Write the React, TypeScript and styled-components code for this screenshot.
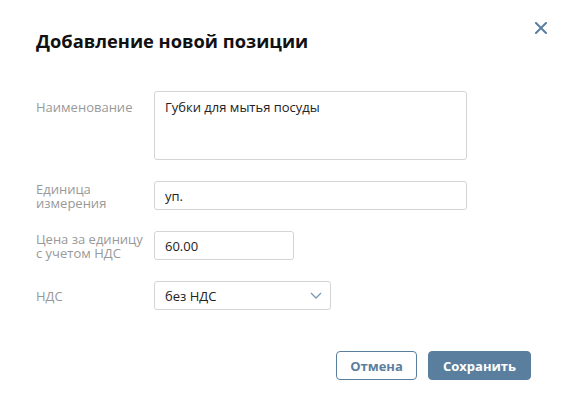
import styled, { createGlobalStyle } from 'styled-components';

const GlobalStyle = createGlobalStyle`
  html, body {
    margin: 0;
    padding: 0;
    background: #fff;
  }
  body {
    font-family: "Open Sans", "Noto Sans", sans-serif;
    color: #222;
  }
`;

const accent = '#5a7f9e';

const Dialog = styled.div`
  position: relative;
  box-sizing: border-box;
  width: 567px;
  height: 417px;
  padding: 28px 36px 0 36px;
  background: #fff;
`;

const CloseButton = styled.button`
  position: absolute;
  top: 20px;
  right: 18px;
  width: 16px;
  height: 16px;
  padding: 0;
  border: none;
  background: none;
  cursor: pointer;
  display: flex;
  align-items: center;
  justify-content: center;
`;

const Title = styled.h2`
  margin: 0 0 37px 0;
  font-size: 18.3px;
  line-height: 26px;
  font-weight: 700;
  color: #111;
`;

const Form = styled.div`
  display: flex;
  flex-direction: column;
  gap: 21px;
`;

const Row = styled.div<{ $top?: boolean }>`
  display: flex;
  align-items: ${(p) => (p.$top ? 'flex-start' : 'center')};
`;

const Label = styled.label<{ $pad?: number }>`
  box-sizing: border-box;
  width: 118px;
  flex: none;
  padding-right: 4px;
  padding-top: ${(p) => p.$pad ?? 0}px;
  font-size: 13px;
  line-height: 14px;
  color: #999;
`;

const fieldBase = `
  box-sizing: border-box;
  border: 1px solid #d4d4d4;
  border-radius: 3px;
  font-family: "Open Sans", "Noto Sans", sans-serif;
  font-size: 13px;
  color: #222;
  background: #fff;
  outline: none;
`;

const TextArea = styled.textarea`
  ${fieldBase}
  width: 313px;
  height: 69px;
  padding: 6px 10px;
  line-height: 18px;
  resize: none;
`;

const Input = styled.input<{ $width: number }>`
  ${fieldBase}
  width: ${(p) => p.$width}px;
  height: 29px;
  padding: 0 10px;
`;

const SelectBox = styled.div`
  ${fieldBase}
  width: 177px;
  height: 29px;
  padding: 0 8px 0 10px;
  display: flex;
  align-items: center;
  justify-content: space-between;
  cursor: pointer;
`;

const Footer = styled.div`
  display: flex;
  justify-content: flex-end;
  gap: 11px;
  margin-top: 41px;
`;

const Button = styled.button<{ $primary?: boolean; $width: number }>`
  box-sizing: border-box;
  width: ${(p) => p.$width}px;
  height: 29px;
  padding: 0;
  border-radius: 4px;
  border: 1px solid ${accent};
  background: ${(p) => (p.$primary ? accent : '#fff')};
  color: ${(p) => (p.$primary ? '#fff' : accent)};
  font-family: "Open Sans", "Noto Sans", sans-serif;
  font-size: 13px;
  font-weight: 700;
  cursor: pointer;
`;

export default function App() {
  return (
    <>
      <GlobalStyle />
      <Dialog>
        <CloseButton aria-label="Закрыть">
          <svg width="12" height="12" viewBox="0 0 12 12">
            <path d="M1 1L11 11M11 1L1 11" stroke={accent} strokeWidth="2" strokeLinecap="square" />
          </svg>
        </CloseButton>
        <Title>Добавление новой позиции</Title>
        <Form>
          <Row $top>
            <Label $pad={9}>Наименование</Label>
            <TextArea defaultValue="Губки для мытья посуды" />
          </Row>
          <Row>
            <Label>Единица измерения</Label>
            <Input $width={313} defaultValue="уп." />
          </Row>
          <Row>
            <Label>Цена за единицу с учетом НДС</Label>
            <Input $width={140} defaultValue="60.00" />
          </Row>
          <Row>
            <Label>НДС</Label>
            <SelectBox>
              <span>без НДС</span>
              <svg width="12" height="7" viewBox="0 0 12 7">
                <path d="M1 1L6 6L11 1" fill="none" stroke="#7a98b2" strokeWidth="1.3" />
              </svg>
            </SelectBox>
          </Row>
        </Form>
        <Footer>
          <Button $width={81}>Отмена</Button>
          <Button $primary $width={103}>Сохранить</Button>
        </Footer>
      </Dialog>
    </>
  );
}
